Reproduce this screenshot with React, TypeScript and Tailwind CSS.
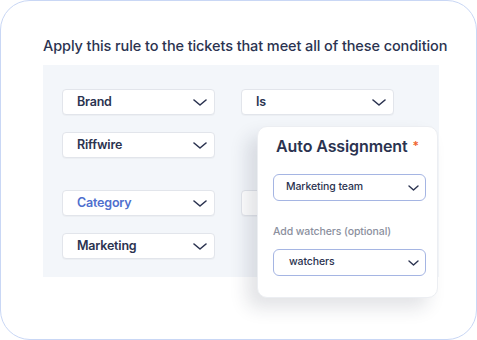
import React from "react";

const Chevron = ({ w = 14, h = 7, sw = 1.6 }: { w?: number; h?: number; sw?: number }) => (
  <svg width={w} height={h} viewBox={`0 0 ${w} ${h}`} fill="none">
    <path
      d={`M1 1 L${w / 2} ${h - 1} L${w - 1} 1`}
      stroke="#2b3350"
      strokeWidth={sw}
      strokeLinecap="round"
      strokeLinejoin="round"
    />
  </svg>
);

const Select = ({ label, blue = false }: { label: string; blue?: boolean }) => (
  <div className="flex h-[26px] w-[153px] items-center justify-between rounded-[4px] border border-[#e2e5eb] bg-white pl-[14px] pr-[7px] shadow-[0_1px_1px_rgba(0,0,0,0.03)]">
    <span
      className={`text-[12.5px] font-semibold leading-none tracking-[-0.2px] ${blue ? "text-[#4f6fce]" : "text-[#2b3350]"}`}
    >
      {label}
    </span>
    <Chevron />
  </div>
);

const PopSelect = ({ label, pl }: { label: string; pl: string }) => (
  <div
    className={`flex h-[27px] w-[153px] items-center justify-between rounded-[6px] border border-[#a5b5e3] bg-white ${pl} pr-[6px]`}
  >
    <span className="text-[10.5px] font-medium leading-none tracking-[-0.1px] text-[#2b3350]">{label}</span>
    <Chevron w={11} h={6} sw={1.4} />
  </div>
);

export default function App() {
  return (
    <div
      className="h-[340px] w-[477px] bg-white"
      style={{ fontFamily: "Inter, 'Noto Sans', sans-serif" }}
    >
      <div className="relative h-[340px] w-[477px] rounded-[30px] border border-[#c9d7f5] bg-white">
        <div className="pl-[42px] pt-[35px]">
          <h1 className="text-[14.5px] font-medium leading-[20px] tracking-[-0.1px] text-[#2b3350]">
            Apply this rule to the tickets that meet all of these condition
          </h1>
          <div className="mt-[9px] h-[212px] w-[396px] bg-[#f3f6fa] pl-[19px] pt-[24px]">
            <div className="flex gap-[26px]">
              <Select label="Brand" />
              <Select label="Is" />
            </div>
            <div className="mt-[17px] flex">
              <Select label="Riffwire" />
            </div>
            <div className="mt-[32px] flex gap-[26px]">
              <Select label="Category" blue />
              <Select label="" />
            </div>
            <div className="mt-[17px] flex">
              <Select label="Marketing" />
            </div>
          </div>
        </div>

        <div className="absolute left-[256px] top-[125px] h-[172px] w-[181px] rounded-[10px] border border-[#eceef2] bg-white pl-[15px] pt-[8px] shadow-[-10px_10px_18px_rgba(30,40,60,0.13)]">
          <div className="flex items-start pl-[3px]">
            <span className="text-[16px] font-semibold leading-[22px] tracking-[-0.1px] text-[#2b3350]">
              Auto Assignment
            </span>
            <span className="ml-[5px] mt-[5px] text-[12px] font-semibold leading-[12px] text-[#f0642f]">*</span>
          </div>
          <div className="mt-[17px]">
            <PopSelect label="Marketing team" pl="pl-[12px]" />
          </div>
          <div className="mt-[24px] text-[10.5px] font-medium leading-[14px] tracking-[-0.1px] text-[#8b909e]">
            Add watchers (optional)
          </div>
          <div className="mt-[10px]">
            <PopSelect label="watchers" pl="pl-[15px]" />
          </div>
        </div>
      </div>
    </div>
  );
}
